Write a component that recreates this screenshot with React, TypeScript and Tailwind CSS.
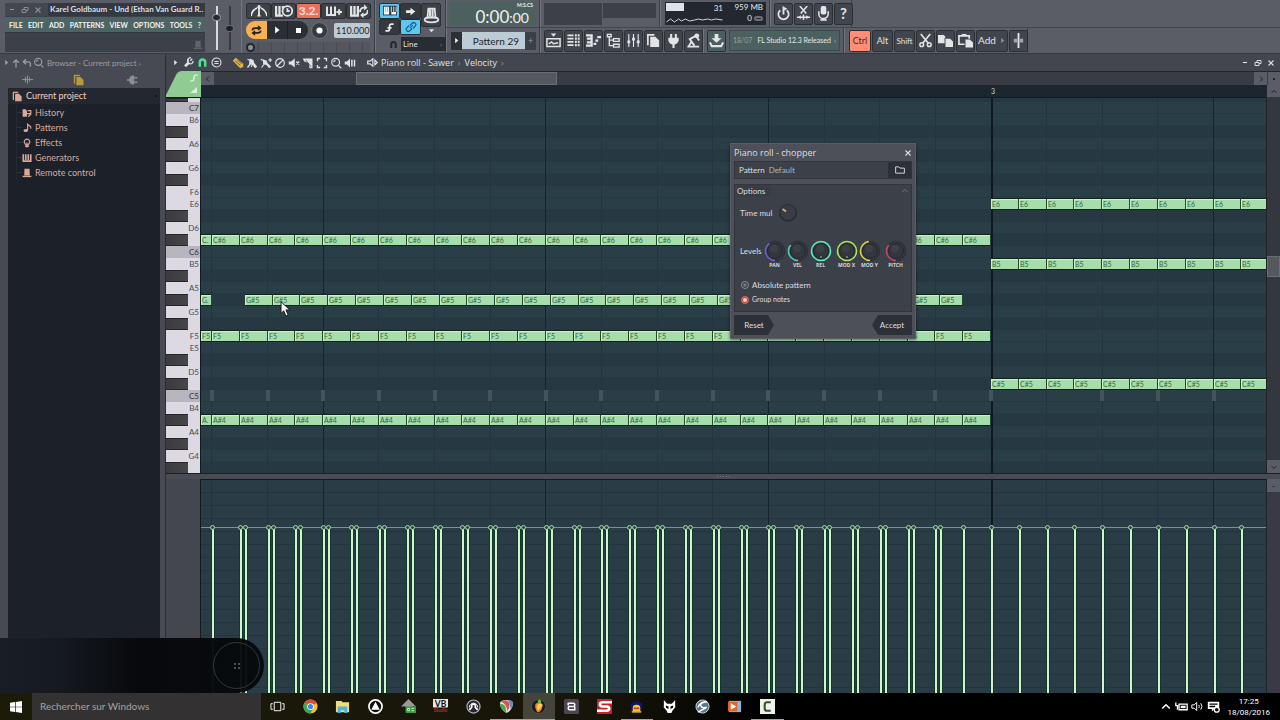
import type { ReactNode } from "react";
import clsx from "clsx";

/* ------------------------------------------------------------------ */
/* Icons                                                              */
/* ------------------------------------------------------------------ */

type IconProps = { size?: number; children: ReactNode; className?: string };

function Icon({ size = 15, children, className }: IconProps) {
  return (
    <svg
      width={size}
      height={size}
      viewBox="0 0 16 16"
      fill="none"
      stroke="currentColor"
      strokeWidth="1.6"
      className={clsx("block shrink-0", className)}
      aria-hidden="true"
    >
      {children}
    </svg>
  );
}

const fill = { fill: "currentColor", stroke: "none" };

const I = {
  metronome: (
    <>
      <path d="M0 13Q1 7 6 5 M16 13Q15 7 10 5 M8 2v10" strokeWidth="1.800" />
      <path d="M5.500 3.500h5L8 7z M6 13.500l2-4 2 4z" {...fill} />
    </>
  ),
  keysClock: (
    <>
      <path d="M1 3.500V12h6 M4 3.500V12 M7 3.500V6" strokeWidth="2" />
      <circle cx="11" cy="8" r="4.300" />
      <path d="M11 5.500V8h2" />
    </>
  ),
  keysPlus: <path d="M1 3.500V12h8V3.500 M5 3.500V12 M10.500 9h5.500 M13.200 6.300v5.500" strokeWidth="2" />,
  keysLoop: (
    <>
      <path d="M1 3.500V12h6V3.500 M4 3.500V12" strokeWidth="2" />
      <path d="M9 9a3.500 3.500 0 0 1 4-4 M15.500 7a3.500 3.500 0 0 1-4 4.500" />
      <path d="M12.500 2l3 3-3 2.500z M12 9l-3 2.500 3 3z" {...fill} />
    </>
  ),
  loop: (
    <>
      <path d="M2 8q0-3.500 4-3.500h5 M14 8q0 3.500-4 3.500H5" strokeWidth="2.400" />
      <path d="M10 0.500L15.500 4.500 10 8.500z M6 15.500L.5 11.500 6 7.500z" {...fill} />
    </>
  ),
  play: <path d="M5 2.500l7 5.500-7 5.500z" {...fill} />,
  stop: <path d="M3.500 3.500h9v9h-9z" {...fill} />,
  record: <circle cx="8" cy="8" r="5.500" {...fill} />,
  piano: (
    <>
      <path d="M0 2h16v11H0z" fill="#2b3a45" stroke="none" />
      <path d="M1 3h6v9H1z M9.500 9H15v3H9.500z" {...fill} />
      <path d="M3 3v6 M5.300 3v6" stroke="#5cc8f2" strokeWidth="1" />
      <path d="M9.500 3v6 M12.300 3v6 M15 3v6" strokeWidth="1" />
    </>
  ),
  arrowRight: <path d="M1.500 6h6.500V2.500L15 8l-7 5.500V10H1.500z" {...fill} />,
  note: <path d="M2 13h3q3 0 3-3V6q0-3 3-3h3 M5 8.500h6" strokeWidth="2.400" />,
  link: (
    <path d="M6.500 9.500l4-4 M6.500 6L9.500 3a2.800 2.800 0 0 1 4 4L10.500 10 M9.500 10L6.500 13a2.800 2.800 0 0 1-4-4L5.500 6" />
  ),
  hat: (
    <>
      <path d="M5 1.500h6l.8 8.500H4.200z" />
      <path d="M6.500 2v7 M9 2v7" strokeWidth="2" />
      <ellipse cx="8" cy="12" rx="6.500" ry="2.400" />
    </>
  ),
  magnet: <path d="M4 14V7.500a4 4 0 0 1 8 0V14" strokeWidth="3.600" />,
  wrench: (
    <>
      <path d="M8.500 8L3 13.500" strokeWidth="3.800" />
      <path d="M13.500 2.500L10.500 5.500 M8 3.500a4 4 0 0 0 5 6L15 6" strokeWidth="1.800" />
      <path d="M11.500 1A4.500 4.500 0 0 0 7 7" strokeWidth="2" />
    </>
  ),
  menuCircle: (
    <>
      <circle cx="8" cy="8" r="6.500" />
      <path d="M5 6.500h6 M5 9.500h6" />
    </>
  ),
  pencil: (
    <>
      <path d="M1 5l4-4 10 8v4l-4 2z" {...fill} />
      <path d="M4 5l7 6 M7 4l6 5" stroke="#42464e" strokeWidth="1" />
    </>
  ),
  brush: (
    <>
      <path d="M2 14l4-5 M2 3l4 2 M7 13l1-2" strokeWidth="1.800" />
      <path d="M5 2l5 2 1 4 4 5-3 2-3-4-5-2z" {...fill} />
    </>
  ),
  brushPlus: (
    <>
      <path d="M2 14l4-5 M1 3l4 2 M11 4h5 M13.500 1.500v5" strokeWidth="1.600" />
      <path d="M4 3l5 2 1 3 5 5-3 2-3-4-5-2z" {...fill} />
    </>
  ),
  ban: (
    <>
      <circle cx="8" cy="8" r="5.800" />
      <path d="M4 12l8-8" />
    </>
  ),
  mute: (
    <>
      <path d="M1 6h3l5-4v12L4 10H1z" {...fill} />
      <path d="M11 6l4 4 M15 6l-4 4" />
    </>
  ),
  slice: (
    <>
      <path d="M1 2h13v13h-4L9 8 3 6z" {...fill} />
      <path d="M5 4l7 9" stroke="#42464e" strokeWidth="1" />
    </>
  ),
  select: <path d="M5.500 2H2v3.500 M10.500 2H14v3.500 M5.500 14H2v-3.500 M10.500 14H14v-3.500" strokeWidth="1.800" />,
  zoom: (
    <>
      <circle cx="7.500" cy="7" r="5.200" />
      <path d="M11 11l4 4 M5 7a2.500 2.500 0 0 1 2.500-2.500" />
    </>
  ),
  playback: (
    <>
      <path d="M1 6h3l4-4v12L4 10H1z" {...fill} />
      <path d="M10.500 3.500v9 M14 3.500v9" strokeWidth="2" />
    </>
  ),
  speaker: <path d="M1 6h3.500l4-3.500v11L4.500 10H1z M11.500 4.500L15 8l-3.500 3.500z" strokeWidth="1.700" />,
  min: <path d="M4 7h8" strokeWidth="2.200" />,
  restore: <path d="M2 7h8v6H2z M6 7V3h8v6h-4" strokeWidth="1.900" />,
  close: <path d="M3 3l10 10 M13 3L3 13" strokeWidth="2.200" />,
  playlist: (
    <>
      <path d="M1 6h14v8.500H1z M3 11.500l3-2 2 2 5-1" />
      <path d="M5 .5h6L8 4z" {...fill} />
    </>
  ),
  stepSeq: (
    <>
      <path d="M1.500 2.500H8 M1.500 6H8 M1.500 9.500H8 M1.500 13H8" strokeWidth="1.800" />
      <path d="M9.500 2.500h5 M9.500 6h5 M9.500 9.500h5 M9.500 13h5" strokeDasharray="2 1" strokeWidth="2.400" />
    </>
  ),
  pianoRoll: (
    <path d="M0 2.500h6V6H1 M1 6h5v4H1 M6 10v3.500H0 M8 11.500h3 M10 8h3 M12 4.500h4" strokeWidth="2.400" />
  ),
  tree: <path d="M1.500 1.500h4v2.500h-4z M3.500 4v9.500H8 M3.500 7.500H8 M8 6h6v3H8z M8 12h6v3H8z" strokeWidth="1.400" />,
  mixer: (
    <>
      <path d="M3 1v14 M8 1v14 M13 1v14" strokeWidth="1.200" />
      <path d="M1.500 8h3v3h-3z M6.500 5h3v3h-3z M11.500 8h3v3h-3z" {...fill} />
    </>
  ),
  pages: (
    <>
      <path d="M2 13V2h7" strokeWidth="1.800" />
      <path d="M4.500 4H10l4 4v7H4.500z" {...fill} />
    </>
  ),
  plug: (
    <>
      <path d="M5.500 1v5 M10.500 1v5 M8 11v5" strokeWidth="2.200" />
      <path d="M2.500 5h11v3q-1 4-5.500 4.500Q3.500 12 2.500 8z" {...fill} />
    </>
  ),
  digger: (
    <>
      <path d="M10.500 3L4 6.500l5 7 M1.500 14.500H14 M6 9l-3 5 M12 5l2 3" strokeWidth="2" />
      <circle cx="11.500" cy="3" r="2.600" {...fill} />
    </>
  ),
  download: (
    <>
      <path d="M6 1h4v4.500h3.500L8 10.500l-5.500-5H6z" {...fill} />
      <path d="M1 10l2 4h10l2-4" strokeWidth="2.200" />
    </>
  ),
  power: (
    <>
      <path d="M4.500 4.500a5.500 5.500 0 1 0 7 0 M8 5v4" strokeWidth="1.900" />
      <path d="M7 0l5 3-5 3z" {...fill} />
    </>
  ),
  cutDown: (
    <>
      <path d="M4 0l7 8 M12 0L5 8 M8 9v6 M1 12h14" strokeWidth="1.600" />
      <path d="M5 9.500v5L2.500 12z M11 9.500v5l2.500-2.500z" {...fill} />
    </>
  ),
  cut: (
    <>
      <path d="M3 1l8 10 M13 1L5 11" strokeWidth="1.800" />
      <circle cx="4" cy="12.500" r="2" />
      <circle cx="12" cy="12.500" r="2" />
    </>
  ),
  mic: (
    <>
      <rect x="5" y="0" width="6" height="9" rx="2" fill="currentColor" stroke="none" />
      <path d="M3 5.500v3a5 5 0 0 0 10 0v-3 M8 12.500v3 M4.500 15h7" />
    </>
  ),
  copy: <path d="M0 2h6l2 2v1H7v6H0z M8 6h5l3 3v6H8z" {...fill} />,
  paste: (
    <>
      <path d="M7 12H1V3h11v3 M4 2h5" strokeWidth="1.800" />
      <path d="M8 7h4.500L16 10v5.500H8z" {...fill} />
    </>
  ),
  sliderKnob: (
    <>
      <path d="M8 0v16" strokeWidth="2" />
      <path d="M3 6h3.500v4H3z M9.500 6H13v4H9.500z" fill="currentColor" opacity=".6" stroke="none" />
    </>
  ),
  wave: <path d="M0 8h16 M5 4v8 M8 2v12 M11 5v6" strokeWidth="1.600" />,
  up: <path d="M8 15V3 M3.500 7.500L8 3l4.500 4.500" strokeWidth="2" />,
  back: <path d="M6.500 2L2 6l4.500 4 M2 6h8q5 0 3 8" strokeWidth="2" />,
  plugSide: (
    <>
      <path d="M1 8h4 M11 5h4 M11 11h4" strokeWidth="2" />
      <path d="M11 2v12H8Q4 12 4 8t4-6z" {...fill} />
    </>
  ),
  tinyRight: <path d="M5 2l7 6-7 6z" {...fill} />,
  chevUp: <path d="M3 10l5-5 5 5" strokeWidth="2" />,
  chevDown: <path d="M3 6l5 5 5-5" strokeWidth="2" />,
  chevLeft: <path d="M10 3L5 8l5 5" strokeWidth="2" />,
  chevRight: <path d="M6 3l5 5-5 5" strokeWidth="2" />,
  history: (
    <>
      <path d="M1 2h5l2 3v9H1z" {...fill} />
      <path d="M9 4h5v6l-4 4 M7 9h7" strokeWidth="2" />
    </>
  ),
  noteFlag: (
    <>
      <path d="M9 12V2l5 4v3" strokeWidth="1.800" />
      <ellipse cx="6" cy="12" rx="3.500" ry="2.400" {...fill} />
    </>
  ),
  effect: <path d="M5 9a4.200 4.200 0 1 1 6 0L10 11H6z M8 7v8 M5 13.500h6" strokeWidth="1.900" />,
  generators: <path d="M2 2v11h12V2 M6 2v9 M10 2v9" strokeWidth="2.600" />,
  remote: (
    <>
      <path d="M4 1h8l.5 11h-9z" {...fill} />
      <path d="M1 13.500h14" strokeWidth="2.200" />
    </>
  ),
  folder: <path d="M1 3h5l2 2h7v8H1z" strokeWidth="1.500" />,
};

/* ------------------------------------------------------------------ */
/* Toolbar                                                            */
/* ------------------------------------------------------------------ */

type ToolButtonProps = { label: string; className?: string; children: ReactNode };

function ToolButton({ label, className, children }: ToolButtonProps) {
  return (
    <button
      type="button"
      aria-label={label}
      className={clsx(
        "flex shrink-0 items-center justify-center rounded-[2px] border border-[#2b2f36]",
        className ?? "h-[22px] w-[19px] bg-[#41454d] text-[#e2e4e6]",
      )}
    >
      {children}
    </button>
  );
}

function Panel({ className, children }: { className: string; children?: ReactNode }) {
  return (
    <div className={clsx("flex shrink-0 items-center border-l border-l-[#71757c] border-r border-r-[#3a3e45]", className)}>
      {children}
    </div>
  );
}

const MENUS = ["FILE", "EDIT", "ADD", "PATTERNS", "VIEW", "OPTIONS", "TOOLS", "?"];

function TitlePanel() {
  return (
    <div className="ml-[5px] mt-[3px] flex h-[49px] w-[200px] shrink-0 flex-col bg-[#3c4149]">
      <div className="flex h-[13px] items-center bg-[#424750] text-[#8b9097]">
        <button type="button" aria-label="Minimize" className="w-[14px] pl-[3px]"><Icon size={8}>{I.min}</Icon></button>
        <button type="button" aria-label="Restore" className="w-[13px] pl-[2px]"><Icon size={8}>{I.restore}</Icon></button>
        <button type="button" aria-label="Close" className="w-[13px] pl-[2px]"><Icon size={8}>{I.close}</Icon></button>
        <span className="ml-[3px] flex-1 whitespace-nowrap bg-[#343941] pl-[2px] text-[8px] font-bold leading-[13px] text-[#dcdfe1]">
          Karel Goldbaum - Und (Ethan Van Guard R..
        </span>
      </div>
      <nav className="mt-[1px] flex h-[15px] items-center justify-between bg-[#4d6465] px-[4px] text-[7px] font-bold text-[#eef3f2]">
        {MENUS.map((m) => (
          <button key={m} type="button" className="leading-[14px]">{m}</button>
        ))}
      </nav>
      <div className="flex flex-1 items-end justify-end border-t border-[#32363d] p-[2px] text-[#5f646c]">
        <Icon size={10}>{I.remote}</Icon>
      </div>
    </div>
  );
}

function MainSliders() {
  return (
    <div className="flex w-[36px] shrink-0 items-center justify-center gap-[4px] pt-[3px]">
      <input
        type="range"
        aria-label="Main volume"
        defaultValue={78}
        className="h-[44px] w-[9px] appearance-none bg-[linear-gradient(90deg,transparent_4px,#d8dadd_4px,#d8dadd_6px,transparent_6px)] [direction:rtl] [writing-mode:vertical-lr] [&::-webkit-slider-thumb]:h-[7px] [&::-webkit-slider-thumb]:w-[9px] [&::-webkit-slider-thumb]:appearance-none [&::-webkit-slider-thumb]:rounded-full [&::-webkit-slider-thumb]:border [&::-webkit-slider-thumb]:border-[#a0a3a8] [&::-webkit-slider-thumb]:bg-[#262a31]"
      />
      <input
        type="range"
        aria-label="Main pitch"
        defaultValue={50}
        className="h-[44px] w-[9px] appearance-none bg-[linear-gradient(90deg,transparent_4px,#363a41_4px,#363a41_6px,transparent_6px)] [direction:rtl] [writing-mode:vertical-lr] [&::-webkit-slider-thumb]:h-[7px] [&::-webkit-slider-thumb]:w-[9px] [&::-webkit-slider-thumb]:appearance-none [&::-webkit-slider-thumb]:rounded-full [&::-webkit-slider-thumb]:border [&::-webkit-slider-thumb]:border-[#70747b] [&::-webkit-slider-thumb]:bg-[#1d2127]"
      />
    </div>
  );
}

const smallBtn = "h-[16px] w-[25px] bg-[#3d4148] text-[#e2e4e6]";

function Transport() {
  return (
    <div className="flex w-[134px] shrink-0 flex-col border-l border-r border-l-[#71757c] border-r-[#3a3e45] px-[4px] pt-[3px]">
      <div className="flex">
        <ToolButton label="Metronome" className={smallBtn}><Icon size={16}>{I.metronome}</Icon></ToolButton>
        <ToolButton label="Wait for input" className={smallBtn}><Icon size={18}>{I.keysClock}</Icon></ToolButton>
        <ToolButton label="Countdown" className="h-[16px] w-[25px] bg-[#ee6e5e] text-[12px] font-bold leading-[12px] text-[#ffe3d8]">3.2.</ToolButton>
        <ToolButton label="Blend recording" className={smallBtn}><Icon size={16}>{I.keysPlus}</Icon></ToolButton>
        <ToolButton label="Loop recording" className={smallBtn}><Icon size={18}>{I.keysLoop}</Icon></ToolButton>
      </div>
      <div className="mt-[2px] flex items-center">
        <button type="button" aria-label="Song mode" className="flex h-[18px] w-[21px] items-center justify-center rounded-l-full bg-[#f9b04e] text-[#2a2116]">
          <Icon size={11}>{I.loop}</Icon>
        </button>
        <button type="button" aria-label="Play" className="flex h-[18px] w-[20px] items-center justify-center bg-[#2a2e35] text-white">
          <Icon size={10}>{I.play}</Icon>
        </button>
        <button type="button" aria-label="Stop" className="flex h-[18px] w-[21px] items-center justify-center rounded-r-full border-l border-[#1c1f24] bg-[#2a2e35] text-white">
          <Icon size={9}>{I.stop}</Icon>
        </button>
        <button type="button" aria-label="Record" className="ml-[3px] flex size-[17px] items-center justify-center rounded-full border border-[#70747b] bg-[#363a41] text-white">
          <Icon size={9}>{I.record}</Icon>
        </button>
        <input
          aria-label="Tempo"
          defaultValue="110.000"
          className="ml-[6px] h-[15px] w-[36px] rounded-[2px] bg-[#bccbd4] pl-[2px] text-[9px] text-[#20282d]"
        />
      </div>
      <input
        type="range"
        aria-label="Song position"
        defaultValue={0}
        className="mt-[3px] h-[11px] w-full appearance-none bg-[repeating-linear-gradient(90deg,#54575f_0px,#54575f_12px,#484b52_12px,#484b52_13px)] [&::-webkit-slider-thumb]:size-[9px] [&::-webkit-slider-thumb]:appearance-none [&::-webkit-slider-thumb]:rounded-full [&::-webkit-slider-thumb]:border-2 [&::-webkit-slider-thumb]:border-[#24282e] [&::-webkit-slider-thumb]:bg-[#8d9197]"
      />
    </div>
  );
}

const squareBtn = "h-[16px] w-[21px] bg-[#34383f] text-[#e8eaec]";
const litBtn = "h-[16px] w-[21px] bg-[#5cc8f2] text-[#eefaff]";

function RecordPanel() {
  return (
    <div className="flex w-[71px] shrink-0 flex-col border-l border-r border-l-[#71757c] border-r-[#3a3e45] px-[3px] pt-[3px]">
      <div className="flex">
        <div className="grid grid-cols-2">
          <ToolButton label="Typing keyboard" className={litBtn}><Icon size={14}>{I.piano}</Icon></ToolButton>
          <ToolButton label="Step edit" className={squareBtn}><Icon size={11}>{I.arrowRight}</Icon></ToolButton>
          <ToolButton label="Scroll" className={squareBtn}><Icon size={11}>{I.note}</Icon></ToolButton>
          <ToolButton label="Multilink" className={litBtn}><span className="text-[#1d5f8a]"><Icon size={12}>{I.link}</Icon></span></ToolButton>
        </div>
        <div className="flex flex-col items-center">
          <ToolButton label="Quantize" className="h-[24px] w-[20px] bg-[#3d4148] text-[#e2e4e6]"><Icon size={17}>{I.hat}</Icon></ToolButton>
          <Icon size={7} className="rotate-90 text-[#dfe1e3]">{I.tinyRight}</Icon>
        </div>
      </div>
      <div className="mt-[2px] flex items-center text-[#24282e]">
        <label htmlFor="snap" aria-label="Snap" className="ml-[10px] w-[12px]"><Icon size={9}>{I.magnet}</Icon></label>
        <select id="snap" className="h-[14px] flex-1 appearance-none bg-[#282c33] pl-[2px] text-[8px] text-[#dfe1e3]">
          <option>Line</option>
        </select>
        <span className="-ml-[6px] text-[7px] text-[#8b8f96]">›</span>
      </div>
    </div>
  );
}

const WINDOW_BUTTONS = [
  ["Playlist", I.playlist],
  ["Step sequencer", I.stepSeq],
  ["Piano roll", I.pianoRoll],
  ["Browser", I.tree],
  ["Mixer", I.mixer],
  ["Project picker", I.pages],
  ["Plugin picker", I.plug],
  ["Tempo tapper", I.digger],
] as const;

function Toolbar() {
  return (
    <header className="flex h-[54px] shrink-0 overflow-hidden border-b border-[#34383f] bg-[#5a5d65]">
      <TitlePanel />
      <MainSliders />
      <Transport />
      <RecordPanel />
      <div className="flex flex-1 flex-col">
        <div className="flex h-[28px] border-b border-[#42464d]">
          <Panel className="w-[94px] pl-[3px]">
            <div className="flex h-[24px] w-[86px] flex-col items-end bg-[#4c605f] pr-[3px] text-[#eef3f1]">
              <span className="text-[5px] font-bold leading-[6px]">M:S:CS</span>
              <span className="pr-[4px] text-[17px] leading-[17px]">0:00<span className="text-[14px]">:00</span></span>
            </div>
          </Panel>
          <Panel className="w-[120px] items-start pl-[3px]">
            <div className="mt-[3px] h-[22px] w-[58px] bg-[#3c4047]" />
            <div className="ml-px mt-[3px] h-[15px] w-[53px] bg-[#3c4047]" />
          </Panel>
          <Panel className="w-[110px] pl-[4px]">
            <div className="flex h-[23px] w-[101px] bg-[#232830] text-[8px] leading-[11px] text-[#e4e7e9]">
              <div className="flex flex-1 flex-col justify-between p-[1px]">
                <div className="flex justify-between">
                  <span className="h-[8px] w-[18px] bg-[#dfe2ea]" />
                  <span>31</span>
                </div>
                <svg viewBox="0 0 56 7" className="block h-[7px] w-full" aria-hidden="true">
                  <path
                    d="M0 5l4-3 4 3 4-3 3 2 4-2 4 2 5-1 4-1 4 1 5-1 4 1 4-1 7 1"
                    fill="none"
                    stroke="#cfd4d8"
                  />
                </svg>
              </div>
              <div className="flex w-[42px] flex-col items-end pr-[3px]">
                <span>959 MB</span>
                <span className="flex items-center gap-[2px]">
                  0<span className="h-[5px] w-[9px] rounded-full border-2 border-[#6b7078]" />
                </span>
              </div>
            </div>
          </Panel>
          <Panel className="w-[82px] gap-[1px] pl-[3px]">
            <ToolButton label="Restart"><Icon>{I.power}</Icon></ToolButton>
            <ToolButton label="Render"><Icon>{I.cutDown}</Icon></ToolButton>
            <ToolButton label="Record audio"><Icon>{I.mic}</Icon></ToolButton>
            <ToolButton label="Help"><span className="text-[15px] font-bold leading-none">?</span></ToolButton>
          </Panel>
        </div>
        <div className="flex h-[25px]">
          <Panel className="w-[94px] pl-[4px]">
            <button type="button" aria-label="Previous pattern" className="flex h-[18px] w-[11px] items-center justify-center bg-[#2c3037] text-white"><Icon size={7}>{I.tinyRight}</Icon></button>
            <button type="button" className="h-[17px] w-[63px] bg-[#bccbd4] pr-[6px] text-right text-[10px] leading-[16px] text-[#20282d]">Pattern 29</button>
            <button type="button" aria-label="Add pattern" className="h-[18px] w-[11px] bg-[#3b3f46] text-[9px] leading-[16px] text-[#9a9ea4]">+</button>
          </Panel>
          <Panel className="w-[163px] gap-[1px] pl-[3px]">
            {WINDOW_BUTTONS.map(([label, icon]) => (
              <ToolButton key={label} label={label}><Icon>{icon}</Icon></ToolButton>
            ))}
          </Panel>
          <Panel className="w-[141px] gap-[3px] pl-[3px]">
            <ToolButton label="Download" className="h-[22px] w-[19px] bg-[#4a5e60] text-[#e2e4e6]"><Icon>{I.download}</Icon></ToolButton>
            <a href="#news" className="flex h-[21px] w-[111px] items-center gap-[5px] whitespace-nowrap border border-[#3c4a4e] bg-[#4c605f] pl-[3px] text-[7px] text-[#e2eae8]">
              <span className="text-[#93a3a1]">18/07</span>FL Studio 12.3 Released<span className="-ml-[2px] text-[#b6c2c0]">›</span>
            </a>
          </Panel>
          <Panel className="w-[184px] gap-[1px] pl-[4px]">
            <ToolButton label="Ctrl" className="h-[22px] w-[22px] bg-[#fd8d75] text-[9px] text-[#5b1d15]">Ctrl</ToolButton>
            <ToolButton label="Alt" className="h-[22px] w-[21px] bg-[#41454d] text-[9px] text-[#e2e4e6]">Alt</ToolButton>
            <ToolButton label="Shift" className="h-[22px] w-[21px] bg-[#41454d] text-[8px] text-[#e2e4e6]">Shift</ToolButton>
            <ToolButton label="Cut"><Icon>{I.cut}</Icon></ToolButton>
            <ToolButton label="Copy"><Icon>{I.copy}</Icon></ToolButton>
            <ToolButton label="Paste"><Icon>{I.paste}</Icon></ToolButton>
            <ToolButton label="Add" className="h-[22px] w-[32px] gap-[3px] bg-[#41454d] text-[10px] text-[#e2e4e6]">
              Add<Icon size={7} className="text-[#8b8f96]">{I.tinyRight}</Icon>
            </ToolButton>
            <ToolButton label="Nudge"><Icon>{I.sliderKnob}</Icon></ToolButton>
          </Panel>
        </div>
      </div>
    </header>
  );
}

/* ------------------------------------------------------------------ */
/* Browser                                                            */
/* ------------------------------------------------------------------ */

const TREE = [
  ["History", I.history],
  ["Patterns", I.noteFlag],
  ["Effects", I.effect],
  ["Generators", I.generators],
  ["Remote control", I.remote],
] as const;

function Browser() {
  return (
    <aside className="flex w-[166px] shrink-0 flex-col border-r border-[#2a2e34] bg-[#474a52]">
      <div className="flex h-[17px] items-center gap-[1px] pl-[3px] text-[#9b9fa5]">
        <Icon size={7}>{I.tinyRight}</Icon>
        <Icon size={10}>{I.up}</Icon>
        <Icon size={10}>{I.back}</Icon>
        <Icon size={11}>{I.zoom}</Icon>
        <span className="ml-[2px] text-[8px]">Browser - Current project ›</span>
      </div>
      <div className="flex h-[17px] w-[160px] items-center justify-around px-[2px] text-[#8b8f95]">
        <button type="button" aria-label="All"><Icon size={11}>{I.wave}</Icon></button>
        <button type="button" aria-label="Current project" className="text-[#b9993f]"><Icon size={12}>{I.pages}</Icon></button>
        <button type="button" aria-label="Plugins"><Icon size={12}>{I.plugSide}</Icon></button>
      </div>
      <div className="ml-[8px] flex w-[152px] flex-1 flex-col bg-[#1b2029]">
        <div className="flex h-[16px] items-center bg-[#232830] pl-[4px] text-[9px] text-[#f0cfc4]">
          <Icon size={11} className="text-[#d9a798]">{I.pages}</Icon>
          <span className="ml-[3px] flex-1">Current project</span>
          <span className="mr-[3px] size-[2px] bg-[#0f1216]" />
        </div>
        <ul className="ml-[8px] mt-[1px] border-l border-[#252a32] text-[9px] text-[#d8a99b]">
          {TREE.map(([label, icon]) => (
            <li key={label} className="flex h-[15px] items-center">
              <span className="h-px w-[5px] bg-[#2f343c]" />
              <Icon size={10}>{icon}</Icon>
              <span className="ml-[3px]">{label}</span>
            </li>
          ))}
        </ul>
      </div>
    </aside>
  );
}

/* ------------------------------------------------------------------ */
/* Piano roll                                                         */
/* ------------------------------------------------------------------ */

const BEAT = 222.6; // width of one beat on the grid
const NOTE = BEAT / 8;
const BAR = 790; // where bar 3 starts
const NAMES = ["C", "C#", "D", "D#", "E", "F", "F#", "G", "G#", "A", "A#", "B"];

// C7 down to F#4
const ROWS = Array.from({ length: 31 }, (_, i) => {
  const midi = 84 - i;
  return `${NAMES[midi % 12]}${Math.floor(midi / 12)}`;
});

type Note = { start: number; end: number };

function chop(from: number, until: number, offset = 0): Note[] {
  const out: Note[] = [];
  for (let i = from; i < until; i++) {
    const start = Math.round(BAR + i * NOTE + offset);
    const end = Math.round(BAR + (i + 1) * NOTE + offset);
    out.push({ start, end });
  }
  return out;
}

const held = [{ start: 0, end: 11 }, ...chop(-28, 0)];
const gSharp = [{ start: 0, end: 11 }, ...chop(-27, -1, 5)];
gSharp[gSharp.length - 1].end = 762;

const NOTES: Record<string, Note[]> = {
  E6: chop(0, 10),
  "C#6": held,
  B5: chop(0, 10),
  "G#5": gSharp,
  F5: held,
  "C#5": chop(0, 10),
  "A#4": held,
};

const GHOSTS = [-14, -13, -12, -11, -10, -9, -8, -7, -6, -5, -4, -3, -2, -1, 0, 2, 3, 4];

const STEMS = [
  ...chop(-28, 10).map((n) => n.start),
  ...chop(-27, -1, 5).map((n) => n.start),
];

function GridLines() {
  return (
    <>
      {Array.from({ length: 19 }, (_, i) => i - 14).map((i) => (
        <span
          key={i}
          className={clsx(
            "pointer-events-none absolute inset-y-0",
            i === 0 ? "w-[2px] bg-[#0f1a20]" : i % 4 === 0 ? "w-px bg-[#16242c]" : "w-px bg-[#223540]",
          )}
          style={{ left: Math.floor(BAR + i * NOTE * 2) }}
        />
      ))}
    </>
  );
}

function PianoKey({ name }: { name: string }) {
  const black = name.includes("#");
  const isC = name.startsWith("C") && !black;
  return (
    <div
      className={clsx(
        "flex h-full w-[35px] shrink-0 items-center border-r border-[#14191e] text-[8px] leading-[12px]",
        isC ? "bg-[#b8b5be] text-[#35343b]" : "bg-[#dcd9e3] text-[#4b4952]",
      )}
    >
      {black ? (
        <span className="h-full w-[22px] border-y border-[#26262a] bg-[linear-gradient(90deg,#3a3a3e,#47464b)]" />
      ) : (
        <span className="w-full pr-px text-right">{name}</span>
      )}
    </div>
  );
}

function Lane({ name }: { name: string }) {
  const black = name.includes("#");
  return (
    <div className="flex h-[12px] shrink-0">
      <PianoKey name={name} />
      <div
        className={clsx(
          "relative flex-1 border-b",
          black ? "border-[#24363f] bg-[#263841]" : "border-[#263942] bg-[#2a3e48]",
        )}
      >
        {(NOTES[name] ?? []).map((n) => (
          <div
            key={n.start}
            className="absolute -bottom-px top-0 z-10 overflow-hidden border-y border-r border-b-[#12241f] border-r-[#1f4a32] border-t-[#12241f] bg-[#a7dcab] pl-px text-[7px] leading-[10px] text-[#35683f] shadow-[inset_1px_1px_0_#c9f2cb]"
            style={{ left: n.start, width: n.end - n.start }}
          >
            {n.end - n.start > 12 || name === "F5" ? name : `${name[0]}.`}
          </div>
        ))}
        {name === "C5" &&
          GHOSTS.map((g) => (
            <span
              key={g}
              className="absolute inset-y-0 z-10 w-[4px] bg-[#42545d]"
              style={{ left: Math.round(BAR + g * NOTE * 2) - 2 }}
            />
          ))}
      </div>
    </div>
  );
}

const ROLL_TOOLS = [
  ["Draw", I.pencil],
  ["Paint", I.brush],
  ["Paint drum sequences", I.brushPlus],
  ["Delete", I.ban],
  ["Mute", I.mute],
  ["Slice", I.slice],
  ["Select", I.select],
  ["Zoom", I.zoom],
  ["Playback", I.playback],
] as const;

function RollTitleBar() {
  return (
    <div className="flex h-[17px] shrink-0 items-center bg-[#42464e] pl-[3px] text-[#e0e2e4]">
      <button type="button" aria-label="Options" className="flex w-[12px] justify-center"><Icon size={7}>{I.tinyRight}</Icon></button>
      <button type="button" aria-label="Tools" className="flex w-[14px] justify-center"><Icon size={11}>{I.wrench}</Icon></button>
      <button type="button" aria-label="Snap" className="flex w-[14px] justify-center text-[#4fdd9a]"><Icon size={11}>{I.magnet}</Icon></button>
      <button type="button" aria-label="Stamp" className="flex w-[14px] justify-center"><Icon size={11}>{I.menuCircle}</Icon></button>
      <div className="ml-[8px] flex">
        {ROLL_TOOLS.map(([label, icon], i) => (
          <button key={label} type="button" aria-label={label} className={clsx("flex w-[14px] justify-center", i === 0 && "text-[#e5b544]")}>
            <Icon size={12}>{icon}</Icon>
          </button>
        ))}
      </div>
      <Icon size={11} className="ml-[10px]">{I.speaker}</Icon>
      <h1 className="ml-[3px] flex flex-1 gap-[4px] whitespace-nowrap font-['Open_Sans',sans-serif] text-[9px]">
        <span>Piano roll - Sawer</span>
        <span className="text-[#8f939a]">›</span>
        <span>Velocity</span>
        <span className="text-[#8f939a]">›</span>
      </h1>
      <button type="button" aria-label="Minimize" className="w-[13px]"><Icon size={8}>{I.min}</Icon></button>
      <button type="button" aria-label="Restore" className="w-[13px]"><Icon size={8}>{I.restore}</Icon></button>
      <button type="button" aria-label="Close" className="w-[13px]"><Icon size={8}>{I.close}</Icon></button>
    </div>
  );
}

const scrollBtn = "flex h-[13px] shrink-0 items-center justify-center bg-[#5a5d65] text-[9px] leading-[9px] text-[#1f2329]";

function PianoRoll() {
  return (
    <main className="flex min-w-0 flex-1 flex-col bg-[#42454d]">
      <RollTitleBar />
      <div className="flex h-[26px] shrink-0">
        <svg viewBox="0 0 35 26" className="block h-[26px] w-[35px] shrink-0" aria-hidden="true">
          <path d="M0 26L0 24L10 4Q12 0 16 0H35V26z" fill="#8fcb93" />
          <path d="M24 10h2q2 0 2-3t2-3h2" stroke="#e8f8e8" strokeWidth="1.200" fill="none" />
          <path d="M31 16v6h-7z" fill="#d8f3d8" />
        </svg>
        <div className="flex min-w-0 flex-1 flex-col">
          <div className="flex h-[14px] items-center border-t border-[#23272d] bg-[#393c44]">
            <button type="button" aria-label="Scroll left" className={clsx(scrollBtn, "w-[13px]")}><Icon size={8}>{I.chevLeft}</Icon></button>
            <div className="ml-[142px] h-[13px] w-[201px] border border-[#6a6d75] bg-[#55585f]" />
            <button type="button" aria-label="Scroll right" className={clsx(scrollBtn, "ml-auto mr-px w-[13px]")}><Icon size={8}>{I.chevRight}</Icon></button>
            <button type="button" aria-label="Scroll menu" className={clsx(scrollBtn, "w-[12px]")}><span className="size-[2px] bg-[#1f2329]" /></button>
          </div>
          <div className="flex h-[12px] justify-between bg-[#1b262e]">
            <span className="ml-[790px] text-[7px] leading-[12px] text-[#c6d0d5]">3</span>
            <button type="button" aria-label="Scroll up" className={clsx(scrollBtn, "w-[13px]")}><Icon size={8}>{I.chevUp}</Icon></button>
          </div>
        </div>
      </div>

      <div className="flex h-[376px] shrink-0">
        <div className="relative flex min-w-0 flex-1 flex-col overflow-hidden border-t border-[#14191e]">
          <div className="flex h-[4px] shrink-0">
            <PianoKey name="C#7" />
            <div className="flex-1 bg-[#263841]" />
          </div>
          {ROWS.map((name) => (
            <Lane key={name} name={name} />
          ))}
          <div className="pointer-events-none absolute inset-y-0 left-[35px] right-0">
            <GridLines />
            <svg viewBox="0 0 12 18" className="absolute left-[79px] top-[203px] z-20 h-[16px] w-[11px]" aria-hidden="true">
              <path d="M1 1v13l3-3 2.500 6 2.500-1-2.500-6H11z" fill="#fff" stroke="#111" />
            </svg>
          </div>
        </div>
        <div className="flex w-[14px] flex-col border-l border-[#1f2328] bg-[#35373f]">
          <div className="mt-[159px] h-[21px] border border-[#6a6d75] bg-[#55585f]" />
          <button type="button" aria-label="Scroll down" className={clsx(scrollBtn, "mt-auto w-[13px]")}><Icon size={8}>{I.chevDown}</Icon></button>
        </div>
      </div>

      <div className="flex h-[6px] shrink-0 items-center justify-center gap-[2px] border-t border-[#1c2026] bg-[#4a4c54]">
        {[0, 1, 2, 3, 4].map((i) => (
          <span key={i} className="size-px bg-[#777a82]" />
        ))}
      </div>

      <div className="flex min-h-0 flex-1">
        <div className="w-[35px] shrink-0 border-r border-[#14191e] bg-[#45474f]" />
        <div className="relative min-w-0 flex-1 overflow-hidden border-t border-[#14191e] bg-[#2a3d46] bg-[repeating-linear-gradient(180deg,transparent_0px,transparent_12px,#22343d_12px,#22343d_13px)]">
          <GridLines />
          <div className="absolute inset-x-0 top-[47px] h-px bg-[#6b9f84]" />
          {STEMS.map((x) => (
            <div
              key={x}
              className="absolute bottom-0 top-[48px] w-[4px] border-x border-[#0f3a29] bg-[#d3f3cf]"
              style={{ left: x - 1 }}
            >
              <span className="absolute -left-[2px] -top-[3px] size-[5px] rounded-full border border-[#a2d9a8] bg-[#2a4a42]" />
            </div>
          ))}
        </div>
        <div className="w-[14px] border-l border-[#1f2328] bg-[#3a3a44]">
          <button type="button" aria-label="Velocity menu" className={clsx(scrollBtn, "w-[13px]")}>-</button>
        </div>
      </div>
    </main>
  );
}

/* ------------------------------------------------------------------ */
/* Chopper dialog                                                     */
/* ------------------------------------------------------------------ */

type KnobProps = { label: string; color: string; amount: number };

function Knob({ label, color, amount }: KnobProps) {
  return (
    <div className="flex w-[23px] flex-col items-center">
      <svg viewBox="0 0 22 22" className="block size-[22px]" aria-hidden="true">
        <circle cx="11" cy="11" r="9.500" fill="none" stroke="#2c2f36" strokeWidth="1.500" />
        <circle cx="11" cy="11" r="7.500" fill="#33363d" stroke="#23262c" />
        <circle cx="10" cy="8.500" r="4" fill="#454850" opacity=".6" />
        <circle
          cx="11"
          cy="11"
          r="9.500"
          fill="none"
          stroke={color}
          strokeWidth="1.600"
          pathLength={100}
          strokeDasharray={`${amount} 100`}
          transform="rotate(90 11 11)"
        />
        {amount === 100 && <circle cx="11" cy="17" r=".8" fill={color} />}
      </svg>
      <span className="whitespace-nowrap font-['Open_Sans',sans-serif] text-[5px] font-bold leading-[7px] text-[#d6d9dc]">{label}</span>
    </div>
  );
}

const checkbox =
  "m-px size-[8px] appearance-none rounded-full border border-[#8b8f96] bg-[#31353b] shadow-[inset_0_0_0_1px_#31353b,inset_0_0_0_4px_#6d7178] checked:border-[#c95a50] checked:bg-[#ffd0c4] checked:shadow-[inset_0_0_0_1px_#c0392f]";

function ChopperDialog() {
  return (
    <section
      role="dialog"
      aria-label="Piano roll - chopper"
      className="absolute left-[730px] top-[143px] z-30 w-[186px] border border-[#5a5d66] bg-[#4d5059] px-[3px] pb-[3px] text-[#dcdee0] shadow-[0_1px_3px_rgba(0,0,0,0.5)]"
    >
      <div className="flex h-[17px] items-center justify-between">
        <h2 className="font-['Open_Sans',sans-serif] text-[9px]">Piano roll - chopper</h2>
        <button type="button" aria-label="Close"><Icon size={8}>{I.close}</Icon></button>
      </div>
      <div className="flex h-[18px] items-center border border-[#32353c] bg-[#3c4149] pl-[4px] text-[8px]">
        <span>Pattern</span>
        <span className="ml-[4px] flex-1 text-[#b0b4b8]">Default</span>
        <button type="button" aria-label="Open pattern" className="flex h-[16px] w-[23px] items-center justify-center bg-[#2c3038]">
          <Icon size={10}>{I.folder}</Icon>
        </button>
      </div>
      <div className="mt-[5px] h-[128px] border border-[#32353c] bg-[#3c4149] pl-[5px] text-[8px]">
        <div className="-ml-[5px] flex h-[11px] items-center justify-between pl-[2px] pr-[2px]">
          <span className="bg-[#383c44] pr-[6px]">Options</span>
          <Icon size={8} className="text-[#70747b]">{I.chevUp}</Icon>
        </div>
        <div className="mt-[4px] flex h-[26px] items-center">
          <span className="w-[38px]">Time mul</span>
          <svg viewBox="0 0 20 20" className="block size-[20px]" aria-hidden="true">
            <circle cx="10" cy="10" r="9" fill="#2a2d33" />
            <circle cx="10" cy="9.500" r="7.500" fill="#3a3d44" />
            <path d="M4.500 6l3.500 2.500" stroke="#d9b45a" strokeWidth="1.600" />
          </svg>
        </div>
        <div className="mt-[14px] flex h-[31px]">
          <span className="w-[23px] leading-[22px]">Levels</span>
          <Knob label="PAN" color="#6f5fd0" amount={40} />
          <Knob label="VEL" color="#56c8c0" amount={36} />
          <Knob label="REL" color="#5ff0bb" amount={100} />
          <span className="w-[3px]" />
          <Knob label="MOD X" color="#a9e85c" amount={100} />
          <Knob label="MOD Y" color="#ddd052" amount={48} />
          <span className="w-[3px]" />
          <Knob label="PITCH" color="#c8446c" amount={36} />
        </div>
        <label className="mt-[6px] flex h-[15px] items-center gap-[2px]">
          <input type="checkbox" className={checkbox} />
          Absolute pattern
        </label>
        <label className="flex h-[15px] items-center gap-[2px] text-[7px]">
          <input type="checkbox" defaultChecked className={checkbox} />
          Group notes
        </label>
      </div>
      <div className="mt-[3px] flex justify-between text-[8px]">
        <button type="button" className="h-[20px] w-[40px] bg-[#2c3039] [clip-path:polygon(0_0,34px_0,100%_50%,34px_100%,0_100%)]">Reset</button>
        <button type="button" className="h-[20px] w-[40px] bg-[#2c3039] [clip-path:polygon(6px_0,100%_0,100%_100%,6px_100%,0_50%)]">Accept</button>
      </div>
    </section>
  );
}

/* ------------------------------------------------------------------ */
/* Taskbar                                                            */
/* ------------------------------------------------------------------ */

type App = { name: string; art: ReactNode; running?: boolean; active?: boolean };

const APPS: App[] = [
  { name: "Task view", art: <path d="M4.500 3.500h7v9h-7z M3 5H1v6h2 M13 5h2v6h-2" stroke="#fff" fill="none" /> },
  {
    name: "Chrome",
    art: (
      <>
        <circle cx="8" cy="8" r="7.500" fill="#f2c230" />
        <path d="M8 8L1.500 4.250A7.500 7.500 0 0 1 14.500 4.250z" fill="#de4b3b" />
        <path d="M8 8L1.500 4.250A7.500 7.500 0 0 0 8 15.500L11 9.700z" fill="#3ea656" />
        <circle cx="8" cy="8" r="3.600" fill="#fff" />
        <circle cx="8" cy="8" r="2.800" fill="#4285e8" />
      </>
    ),
  },
  {
    name: "Explorer",
    art: (
      <>
        <path d="M1 2h6l1 1.500h7V14H1z" fill="#f6d978" />
        <path d="M3 8h10v7h-3v-3H6v3H3z" fill="#4bb4e6" />
      </>
    ),
  },
  {
    name: "Player",
    art: (
      <>
        <circle cx="8" cy="8" r="7" fill="#111" stroke="#fff" strokeWidth="1.800" />
        <path d="M8 3L12.500 11.500h-9z" fill="#fff" />
      </>
    ),
  },
  {
    name: "Updater",
    art: (
      <>
        <path d="M8 0l8 8h-4v5H5V8H0z" fill="#9a9a9a" />
        <path d="M5 8h11v7H5z" fill="#3c9b3f" />
        <path d="M7 10h2v2.500H7z M11 10h3 M11 12.500h3" stroke="#c7eec4" fill="none" />
      </>
    ),
  },
  {
    name: "VB Audio",
    art: (
      <>
        <path d="M0 0h16v9H0z" fill="#e8e8e8" />
        <text x="8" y="8" textAnchor="middle" fontSize="9" fontWeight="bold" fill="#111">VB</text>
        <text x="8" y="14" textAnchor="middle" fontSize="5" fontWeight="bold" fill="#d42020">Studio</text>
      </>
    ),
  },
  {
    name: "Headphones",
    art: (
      <>
        <circle cx="8" cy="8" r="7" fill="#2b2633" stroke="#b9b4c4" strokeWidth="1.200" />
        <path d="M3.500 11.500L6 9V7.500a2 2 0 0 1 4 0V9l2.500 2.500" stroke="#fff" strokeWidth="1.800" fill="none" />
        <path d="M3.500 9a4.500 4.500 0 0 1 9 0" stroke="#fff" fill="none" />
      </>
    ),
  },
  {
    name: "Reaper",
    running: true,
    art: (
      <>
        <path d="M1 5q0-4 7-4t7 4q-1 7-7 10Q2 12 1 5z" fill="#e7e7e7" />
        <path d="M1 5q5 0 6 4l1 6Q2 12 1 5z" fill="#4aa851" />
        <path d="M2 3q6-4 9 1 1 5-2 9-1-8-7-10z" fill="#d9534f" />
        <path d="M9 1q6 0 6 4-1 5-3 7 1-8-3-11z" fill="#5b8fc4" />
      </>
    ),
  },
  {
    name: "FL Studio",
    running: true,
    active: true,
    art: (
      <>
        <circle cx="8" cy="8" r="7.500" fill="#1c1c1e" stroke="#55555a" />
        <path d="M4.500 7q0-3 4-3t4 3q-1 6-5 7.500-3-2.500-3-7.500z" fill="#f48a2c" />
        <path d="M8 5q4-1 4 2l-4 5q-3-4 0-7z" fill="#f9d15c" />
        <path d="M8 5Q6 2 9 .5 12 2 10 5z" fill="#6cc04a" />
      </>
    ),
  },
  {
    name: "Sampler",
    art: (
      <>
        <rect x="0" y="0" width="16" height="16" rx="2" fill="#4c4453" />
        <path d="M4.500 4.500h5.500q1.500 0 1.500 1.500v.5q0 1.500-1.500 1.500H6Q4.500 8 4.500 9.500V10q0 1.500 1.500 1.500h5.500V8 M4.500 4v3" stroke="#fff" strokeWidth="1.600" fill="none" />
      </>
    ),
  },
  {
    name: "Editor",
    art: (
      <>
        <rect x="0" y="0" width="16" height="16" rx="1" fill="#c2242b" />
        <path d="M16 3.500H6Q3 3.500 3 5.700T6 8h4q3 0 3 2.200t-3 2.300H0" stroke="#fff" strokeWidth="2.800" fill="none" />
      </>
    ),
  },
  {
    name: "Helmet",
    running: true,
    art: (
      <>
        <path d="M2 5q6-5 12 0v9H2z" fill="#12146e" />
        <path d="M4 9.500q0-3.500 4-3.500t4 3.500V13H4z" fill="#f4cc2c" />
        <path d="M5 9h6v2H5z" fill="#d23b2b" />
        <path d="M3 13h10v1.500H3z" fill="#f4cc2c" />
      </>
    ),
  },
  {
    name: "Foobar",
    art: (
      <>
        <path d="M2 1l3.500 4h5L14 1v6q1 2-1 3-2 2-3 5H6q-1-3-3-5-2-1-1-3z" fill="#fff" />
        <path d="M4 7l3 1v2.500q-3 0-3-3.500z M12 7L9 8v2.500q3 0 3-3.500z" fill="#000" />
      </>
    ),
  },
  {
    name: "Converter",
    art: (
      <>
        <circle cx="8" cy="8" r="7" fill="#5b7787" stroke="#cfdbe2" />
        <path d="M13 3Q5 4 6 7t5 2-8 5 M3 9q3-6 8-6" stroke="#fff" strokeWidth="1.500" fill="none" />
      </>
    ),
  },
  {
    name: "Media player",
    art: (
      <>
        <rect x="2" y="2" width="13" height="12" fill="#8fb6d8" />
        <rect x="1" y="3" width="10" height="10" fill="#e0632c" />
        <path d="M4 4.500L10 8l-6 3.500z" fill="#fff" />
      </>
    ),
  },
  {
    name: "Camtasia",
    running: true,
    art: (
      <>
        <rect width="16" height="16" fill="#eef2ea" />
        <path d="M11.500 3.500h-4q-2.500 0-2.500 2.500v4q0 2.500 2.500 2.500h4" stroke="#37502c" strokeWidth="2.200" fill="none" />
      </>
    ),
  },
];

function Taskbar() {
  return (
    <footer className="flex h-[27px] shrink-0 bg-[linear-gradient(90deg,#1d1b08_0px,#17150a_600px,#000_760px)]">
      <button type="button" aria-label="Start" className="flex w-[32px] items-center justify-center">
        <svg viewBox="0 0 12 12" className="size-[12px]" fill="#fff" aria-hidden="true">
          <path d="M0 1.700l5-.7v4.700H0z M5.700.9L12 0v5.700H5.700z M0 6.300h5V11l-5-.7z M5.700 6.300H12V12l-6.300-.9z" />
        </svg>
      </button>
      <input
        type="search"
        aria-label="Rechercher sur Windows"
        placeholder="Rechercher sur Windows"
        className="w-[229px] shrink-0 bg-[#333132] pl-[8px] font-['Lato',sans-serif] text-[10px] placeholder:text-[#a5a3a3]"
      />
      <div className="flex w-[523px] shrink-0">
        {APPS.map((app) => (
          <button
            key={app.name}
            type="button"
            aria-label={app.name}
            className={clsx(
              "flex flex-1 items-center justify-center border-b pt-px",
              app.active ? "bg-[#45443b]" : "",
              app.running ? "border-[#87a9cf]" : "border-transparent",
            )}
          >
            <svg viewBox="0 0 16 16" className="size-[15px]" aria-hidden="true">{app.art}</svg>
          </button>
        ))}
      </div>
      <div className="ml-auto flex items-center gap-[3px] text-white">
        <Icon size={12}>{I.chevUp}</Icon>
        <Icon size={13}><path d="M5 5h10v7H5z M1 3v4h3 M3 7v5" /><path d="M7 7h6v3H7z" {...fill} /></Icon>
        <Icon size={13}><path d="M1 6h3l3-3v10l-3-3H1z M9.500 6q1.500 2 0 4 M12 4q3 4 0 8" strokeWidth="1.200" /></Icon>
        <Icon size={13}><path d="M1 2h14v9H9l-3 3v-3H1z" {...fill} /><path d="M3 5h10 M3 8h7" stroke="#000" /><circle cx="12" cy="12" r="3" fill="#000" /></Icon>
        <div className="ml-[4px] mr-[10px] text-center font-['Roboto',sans-serif] text-[8px] leading-[11px]">
          17:25
          <br />
          18/08/2016
        </div>
      </div>
    </footer>
  );
}

function CameraPill() {
  return (
    <div className="absolute bottom-[27px] left-0 z-20 flex h-[55px] w-[264px] items-center justify-end rounded-r-full bg-[linear-gradient(90deg,#191d25_0px,#151920_60px,#07090c_140px,#06080bf2)] pr-[4px]">
      <div className="grid size-[47px] place-content-center rounded-full border border-[#34363b]">
        <div className="grid grid-cols-2 gap-[2px]">
          {[0, 1, 2, 3].map((i) => (
            <span key={i} className="size-[2px] bg-[#4b4d52]" />
          ))}
        </div>
      </div>
    </div>
  );
}

export default function App() {
  return (
    <div className="relative flex h-screen flex-col overflow-hidden bg-[#1b2029] font-['Lato',sans-serif]">
      <Toolbar />
      <div className="flex min-h-0 flex-1">
        <Browser />
        <PianoRoll />
      </div>
      <ChopperDialog />
      <CameraPill />
      <Taskbar />
    </div>
  );
}
